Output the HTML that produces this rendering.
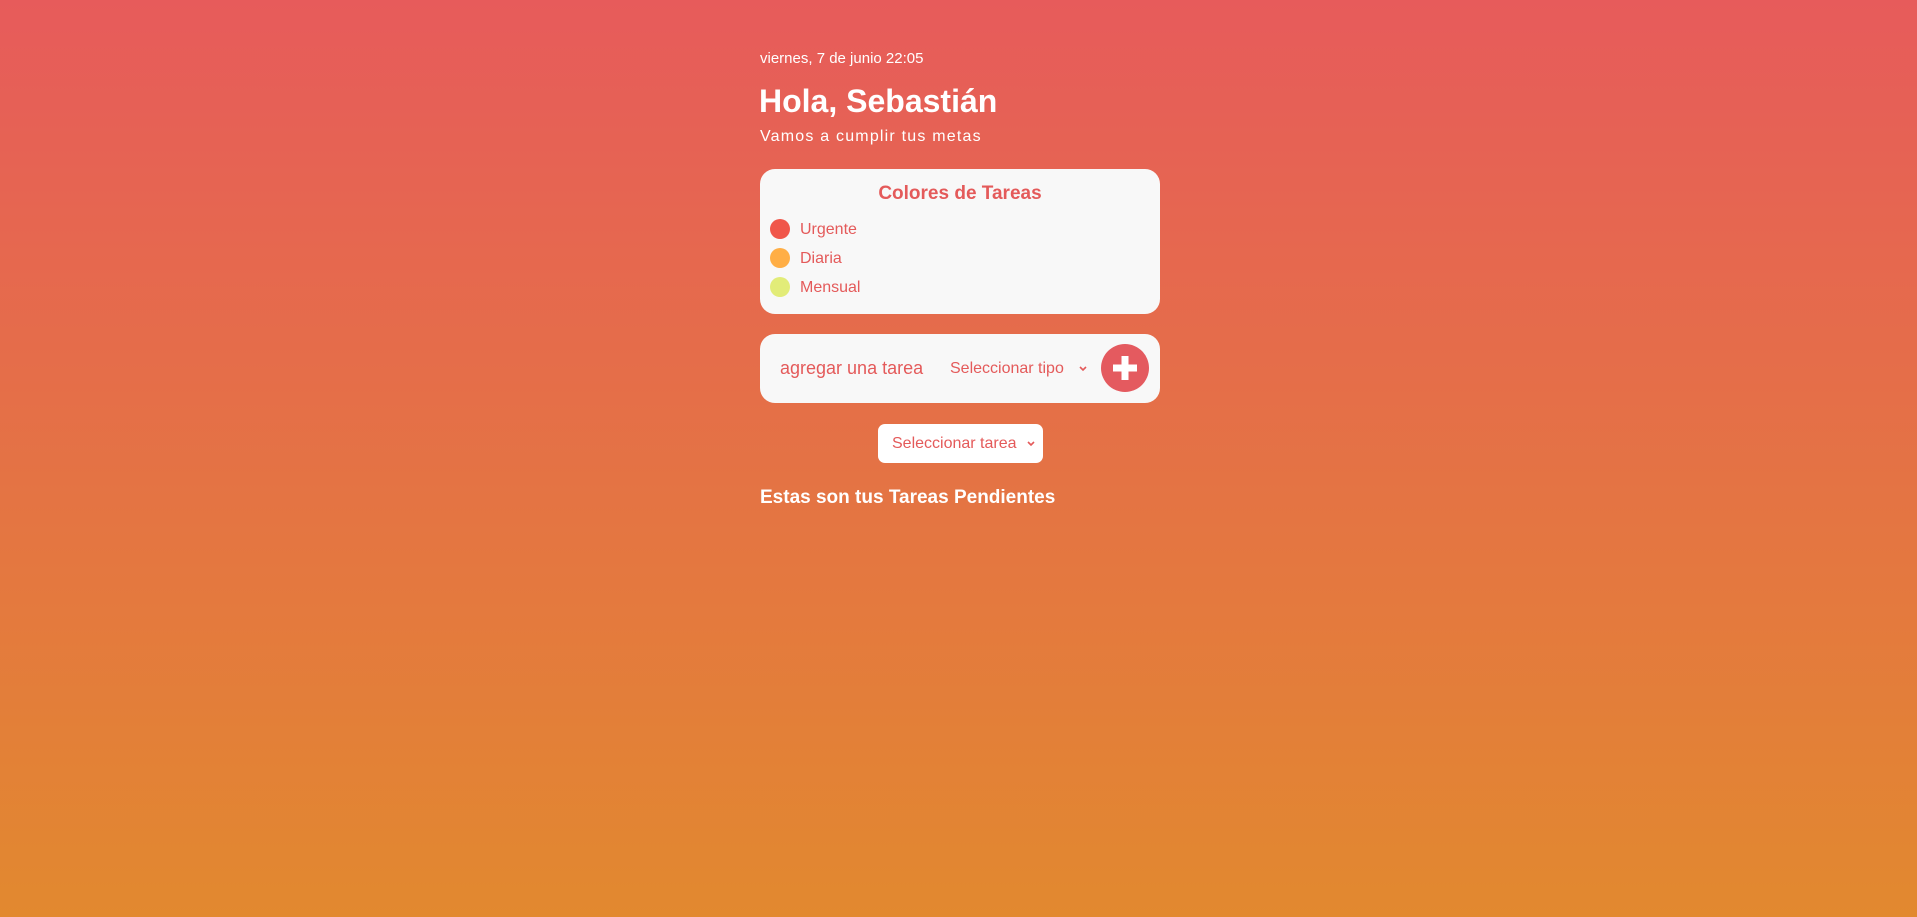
<!DOCTYPE html>
<html><head><meta charset="utf-8"><style>
html,body{margin:0;height:917px;overflow:hidden}
body{background:linear-gradient(to bottom,#e75b5b 0%,#e2892f 100%);font-family:"Liberation Sans",sans-serif;position:relative;width:1917px}
.a{position:absolute;white-space:nowrap}
.card{position:absolute;left:760px;width:400px;background:#f8f8f8;border-radius:15px}
.dot{position:absolute;left:10px;width:20px;height:20px;border-radius:50%}
.lbl{position:absolute;left:40px;font-size:16px;color:#e45a5a}
</style></head><body>
<div class="a" style="left:760px;top:50px;font-size:15px;color:#fff">viernes, 7 de junio 22:05</div>
<div class="a" style="left:759px;top:83px;font-size:32px;font-weight:bold;color:#fff">Hola, Sebastián</div>
<div class="a" style="left:760px;top:128px;font-size:16px;color:#fff;letter-spacing:1.2px">Vamos a cumplir tus metas</div>
<div class="card" style="top:169px;height:145px">
 <div class="a" style="left:0;width:400px;text-align:center;top:14px;font-size:19px;font-weight:bold;color:#e45a5a">Colores de Tareas</div>
 <div class="dot" style="top:50px;background:#f0564a"></div><div class="lbl" style="top:52px">Urgente</div>
 <div class="dot" style="top:79px;background:#ffae45"></div><div class="lbl" style="top:81px">Diaria</div>
 <div class="dot" style="top:108px;background:#e2ec78"></div><div class="lbl" style="top:110px">Mensual</div>
</div>
<div class="card" style="top:334px;height:69px">
 <div class="a" style="left:20px;top:24px;font-size:18px;color:#e45a5a">agregar una tarea</div>
 <div class="a" style="left:190px;top:26px;font-size:16px;color:#e45a5a">Seleccionar tipo</div>
 <svg class="a" style="left:318px;top:31px" width="10" height="8" viewBox="0 0 10 8"><path d="M2 2l3 3 3-3" stroke="#e45a5a" stroke-width="1.6" fill="none"/></svg>
 <svg class="a" style="left:341px;top:10px" width="48" height="48" viewBox="0 0 48 48"><circle cx="24" cy="24" r="24" fill="#e45a5f"/><path d="M24 12v24M12 24h24" stroke="#fff" stroke-width="7"/></svg>
</div>
<div class="a" style="left:878px;top:424px;width:165px;height:39px;background:#fff;border-radius:7px">
 <div class="a" style="left:14px;top:11px;font-size:16px;color:#e45a5a">Seleccionar tarea</div>
 <svg class="a" style="left:148px;top:16px" width="10" height="8" viewBox="0 0 10 8"><path d="M2 2l3 3 3-3" stroke="#e45a5a" stroke-width="1.6" fill="none"/></svg>
</div>
<div class="a" style="left:760px;top:487px;font-size:19px;font-weight:bold;color:#fff">Estas son tus Tareas Pendientes</div>
</body></html>
